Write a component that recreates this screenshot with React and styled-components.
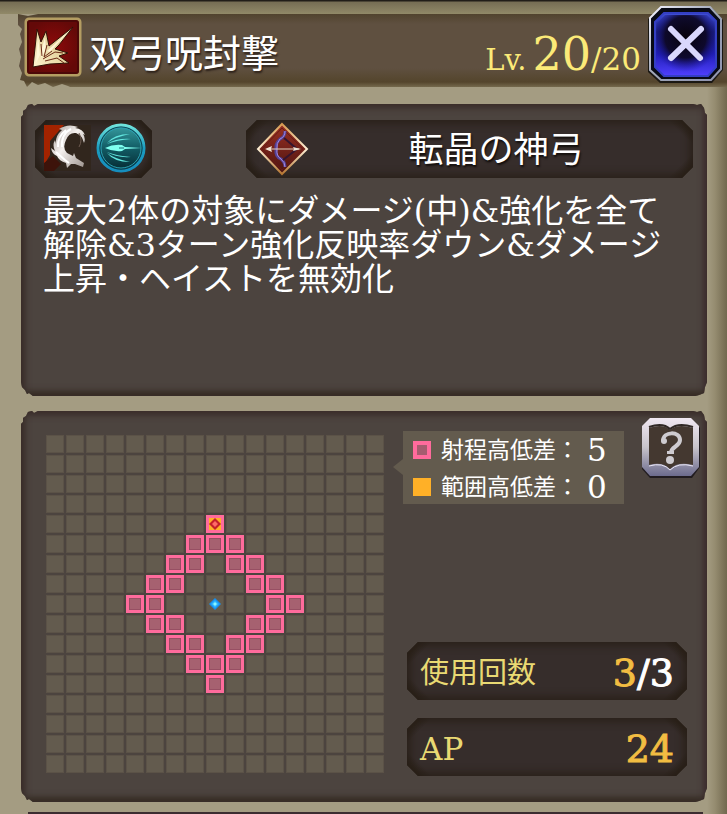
import React from "react"
import styled, {createGlobalStyle, css} from "styled-components"

const colors = {
    parchment: "#a49c82",
    bark: "#5f5040",
    panel: "#4c443f",
    inset: "#362d2b",
    tile: "#635b4e",
    pink: "#ff6b9c",
    orange: "#ffb027",
    lemon: "#fbea78",
    gold: "#f2bd42",
}

const GlobalStyle = createGlobalStyle`
    * {
        box-sizing: border-box;
    }

    body {
        margin: 0;
        background: ${colors.parchment};
        color: white;
        font-family: "DejaVu Serif", "Noto Sans CJK JP", serif;
    }

    h1, h2, p, dl, dt, dd {
        margin: 0;
        font-weight: 400;
    }
`

const Page = styled.main`
    display: flex;
    flex-direction: column;
    min-height: 100vh;
    padding-top: 14px;
    background:
        linear-gradient(#211d18 0 1px, #766d54 2px, #918968 14px, transparent 14px) top / 100% 14px no-repeat,
        linear-gradient(to right, transparent, #958c70 8px, #71684e 20px) right / 20px 100% no-repeat,
        ${colors.parchment};
`

const Header = styled.header`
    position: relative;
    z-index: 0;
    display: flex;
    height: 71px;
    padding-left: 24px;

    &::before {
        content: "";
        position: absolute;
        z-index: -1;
        inset: 0 0 -2px 18px;
        background: linear-gradient(#51432e, ${colors.bark} 10px, ${colors.bark} 54px, #54452c 68px, #75694d 73px);
        clip-path: polygon(0 0, 10px 2px, 20px 0, 100% 0, 100% 100%, 52px 100%, 50px 72px, 44px 70px, 35px 73px,
            27px 69px, 20px 71px, 14px 68px, 9px 73px, 6px 67px, 2px 66px, 4px 59px, 1px 52px, 3px 43px,
            1px 35px, 4px 28px, 2px 20px, 4px 15px, 0 11px);
    }
`

const SkillIcon = styled.svg`
    flex: none;
    width: 58px;
    height: 60px;
    margin-top: 3px;
`

const Title = styled.h1`
    flex: 1;
    padding: 4px 0 0 7px;
    font-size: 38px;
    line-height: 72px;
    white-space: nowrap;
    text-shadow: 1px 2px 2px #2b2019;
`

const Level = styled.p`
    display: flex;
    align-items: baseline;
    padding-top: 4px;
    color: ${colors.lemon};
    font-size: 31px;
    line-height: 72px;
    white-space: nowrap;
`

const LevelPrefix = styled.span`
    margin-right: 6px;
    font-size: 29px;
`

const LevelNow = styled.span`
    font-size: 46px;
`

const IconButton = styled.button`
    flex: none;
    padding: 0;
    border: 0;
    background: none;
    cursor: pointer;

    svg {
        display: block;
        width: 100%;
        height: 100%;
    }
`

const CloseButton = styled(IconButton)`
    width: 76px;
    height: 78px;
    margin: -9px 4px 0 6px;
`

const HelpButton = styled(IconButton)`
    width: 60px;
    height: 61px;
`

const Panel = styled.section`
    margin: 0 20px 15px 21px;
    background: ${colors.panel};
    box-shadow: inset 0 7px 6px -3px #3a2d2a, inset 6px 0 6px -2px #392d29, inset -6px 0 6px -3px #3c2b2d,
        inset 0 -7px 6px -2px #372d25;
    clip-path: polygon(0 13px, 2px 11px, 2px 7px, 5px 5px, 7px 1px, 11px 0, 13px 2px, 17px 0,
        calc(100% - 14px) 0, calc(100% - 10px) 1px, calc(100% - 6px) 0, calc(100% - 3px) 4px, calc(100% - 2px) 9px, 100% 11px,
        100% calc(100% - 14px), calc(100% - 2px) calc(100% - 9px), calc(100% - 3px) calc(100% - 3px),
        calc(100% - 8px) calc(100% - 1px), calc(100% - 12px) 100%, calc(100% - 18px) 100%,
        12px 100%, 8px calc(100% - 3px), 6px calc(100% - 2px), 4px calc(100% - 6px), 1px calc(100% - 9px), 0 calc(100% - 14px));
`

const SummaryPanel = styled(Panel)`
    min-height: 292px;
    margin-top: 19px;
    padding: 16px 14px;
`

const RangePanel = styled(Panel)`
    display: flex;
    gap: 19px;
    min-height: 391px;
    margin-bottom: 10px;
    padding: 7px 6px 26px 25px;
`

const NextPanel = styled.div`
    flex: 1;
    margin: 0 24px 0 28px;
    background: #3b2c30;
`

const carved = css`
    background:
        linear-gradient(135deg, #292018 9px, transparent 18px) 0 0 / 30px 30px no-repeat,
        linear-gradient(225deg, #292018 9px, transparent 18px) 100% 0 / 30px 30px no-repeat,
        linear-gradient(45deg, #292018 9px, transparent 18px) 0 100% / 30px 30px no-repeat,
        linear-gradient(315deg, #292018 9px, transparent 18px) 100% 100% / 30px 30px no-repeat,
        ${colors.inset};
    box-shadow: inset 0 0 9px 3px #292018;
    clip-path: polygon(11px 0, calc(100% - 11px) 0, 100% 11px, 100% calc(100% - 11px), calc(100% - 11px) 100%,
        11px 100%, 0 calc(100% - 11px), 0 11px);
`

const SummaryTop = styled.div`
    display: flex;
    justify-content: space-between;
    gap: 94px;
`

const Traits = styled.div`
    ${carved}
    display: flex;
    align-items: center;
    flex: none;
    gap: 5px;
    width: 117px;
    height: 58px;
    padding: 0 0 2px 9px;

    svg {
        flex: none;
    }
`

const Source = styled.div`
    ${carved}
    display: flex;
    align-items: center;
    flex: 1;
    height: 58px;
    padding: 0 10px;

    svg {
        flex: none;
    }
`

const SourceName = styled.h2`
    flex: 1;
    padding-top: 2px;
    font-size: 35px;
    line-height: 56px;
    text-align: center;
    text-shadow: 1px 2px 2px #120d0b;
`

const Description = styled.p`
    padding: 16px 6px 0 8px;
    font-size: 32px;
    line-height: 34px;
`

const Board = styled.div`
    display: grid;
    flex: none;
    grid-template-columns: repeat(17, 18px);
    grid-auto-rows: 18px;
    gap: 2px;
    align-self: flex-start;
    margin-top: 17px;
`

const Tile = styled.span`
    display: grid;
    place-items: center;
    background: ${colors.tile};
    border: 1px solid #5b5247;

    ${({$reach}) => $reach && css`
        border: 3px solid ${colors.pink};
        background: #a66170;
        box-shadow: inset 0 0 0 1px #974f63;
    `}
`

const Side = styled.div`
    display: flex;
    flex: 1;
    flex-direction: column;
    min-width: 0;
`

const SideTop = styled.div`
    display: flex;
    justify-content: space-between;
`

const Legend = styled.dl`
    position: relative;
    width: 221px;
    height: 73px;
    margin-top: 13px;
    background: ${colors.tile};

    &::before {
        content: "";
        position: absolute;
        top: 28px;
        left: -10px;
        border: 8px solid transparent;
        border-width: 8px 10px 8px 0;
        border-right-color: ${colors.tile};
    }
`

const LegendRow = styled.div`
    display: flex;
    align-items: center;
    height: 37px;
    padding-left: 10px;
    line-height: 36px;
    white-space: nowrap;

    dt {
        width: 142px;
        margin-left: 10px;
        font-size: 23px;
    }

    dd {
        flex: 1;
        padding-left: 4px;
        font-size: 31px;
    }
`

const Swatch = styled.span`
    width: 18px;
    height: 18px;
    background: ${({$color}) => $color};
    border: ${({$edge}) => $edge ? `4px solid ${$edge}` : 0};
`

const Stats = styled.dl`
    display: grid;
    gap: 18px;
    margin: auto 14px 0 4px;
`

const Stat = styled.div`
    ${carved}
    display: flex;
    align-items: center;
    justify-content: space-between;
    height: 58px;
    padding: 3px 13px 0;
    line-height: 54px;
    white-space: nowrap;

    dt {
        color: #e9d973;
        font-size: ${({$large}) => $large ? 31 : 29}px;
    }

    dd {
        font-size: 38px;
        -webkit-text-stroke: 1px currentColor;
    }
`

const Gold = styled.span`
    color: ${colors.gold};
`

const SIZE = 17
const CENTER = 8

const tiles = Array.from({length: SIZE * SIZE}, (_, i) => {
    const dx = i % SIZE - CENTER
    const dy = Math.floor(i / SIZE) - CENTER
    const distance = Math.abs(dx) + Math.abs(dy)
    return {
        id: i,
        reach: distance === 3 || distance === 4,
        caster: distance === 0,
        target: dx === 0 && dy === -4,
    }
})

const ClawIcon = () => (
    <SkillIcon viewBox="0 0 58 60" aria-hidden="true">
        <defs>
            <radialGradient id="claw-red">
                <stop offset="0" stopColor="#8f0a0a"/>
                <stop offset="1" stopColor="#640908"/>
            </radialGradient>
            <linearGradient id="claw-bone" x1="0" y1="1" x2="1" y2="0">
                <stop offset="0" stopColor="#fff5cf"/>
                <stop offset=".55" stopColor="#e3d09a"/>
                <stop offset="1" stopColor="#f8edc5"/>
            </linearGradient>
        </defs>
        <rect x="1" y="2" width="56" height="57" rx="5" fill="#3f3120"/>
        <rect x="2" y="2" width="54" height="56" rx="3" fill="url(#claw-red)" stroke="#b49d62" strokeWidth="3"/>
        <rect x="4" y="4" width="50" height="52" rx="2" fill="none" stroke="#4c0707" strokeWidth="2"/>
        <path d="M9 50L13 12l4 13 5-11 3 15L49 10 35 28l-4 4 13 4-9 3 10 7-19 1z" fill="url(#claw-bone)" stroke="#301106" strokeWidth="1"/>
        <path d="M14 19l2 19-4 8zM21 20l1 13-5 8 1-10zM44 15L26 35l-3-1z" fill="#fff7d6"/>
        <path d="M17 27l1 12M23 28l-3 12 8-6M19 42l12-7 8 1M21 44l12-3 7 5" stroke="#6b2b16" strokeWidth="1" fill="none"/>
    </SkillIcon>
)

const CloseIcon = () => (
    <svg viewBox="0 0 76 78" aria-hidden="true">
        <defs>
            <linearGradient id="close-rim" x2="1" y2="1">
                <stop offset="0" stopColor="#f3f3ff"/>
                <stop offset=".5" stopColor="#9ca3b4"/>
                <stop offset="1" stopColor="#9094b0"/>
            </linearGradient>
            <linearGradient id="close-blue" x2="0" y2="1">
                <stop offset="0" stopColor="#4050d8"/>
                <stop offset=".3" stopColor="#1b207d"/>
                <stop offset=".65" stopColor="#211fb8"/>
                <stop offset="1" stopColor="#503fff"/>
            </linearGradient>
            <radialGradient id="close-dark" cy=".38" r=".6">
                <stop offset="0" stopColor="#08030c"/>
                <stop offset=".6" stopColor="#0d0826" stopOpacity=".95"/>
                <stop offset="1" stopColor="#1712a0" stopOpacity="0"/>
            </radialGradient>
        </defs>
        <path d="M13 3h52l11 12v50L65 78H13L1 67V14z" fill="#1b1813"/>
        <path d="M14 2h49l11 12v50L64 75H14L3 65V13z" fill="#080a16" stroke="url(#close-rim)" strokeWidth="2"/>
        <path d="M17 8h44l8 8v46l-8 9H17l-9-9V17z" fill="url(#close-blue)" stroke="#343fc4" strokeWidth="2"/>
        <path d="M18 10h42l7 7v43l-8 8H18l-8-8V18z" fill="url(#close-dark)"/>
        <path d="M24 24l29 29M54 24L24 53" stroke="#d9d7fc" strokeWidth="6" strokeLinecap="round"/>
    </svg>
)

const HelpIcon = () => (
    <svg viewBox="0 0 60 61" aria-hidden="true">
        <defs>
            <linearGradient id="help-rim" x2="0" y2="1">
                <stop offset="0" stopColor="#f0e7f1"/>
                <stop offset=".5" stopColor="#c8c4cb"/>
                <stop offset="1" stopColor="#6c6b8d"/>
            </linearGradient>
        </defs>
        <path d="M9 2h42l8 8v39l-8 11H9L1 51V10z" fill="#211c20"/>
        <path d="M9 0h41l8 8v41l-8 9H9l-8-9V8z" fill="url(#help-rim)"/>
        <path d="M8 10q14-5 21 2 8-7 23-2v37q-15-4-23 4-8-8-21-4z" fill="#443830"/>
        <path d="M8 9q14-5 21 2 8-7 23-2" fill="none" stroke="#302825" strokeWidth="2"/>
        <path d="M8 48q14-4 21 4 8-8 23-4" fill="none" stroke="#e9e5f4" strokeWidth="1"/>
        <path d="M22 23c0-10 17-10 17-1 0 7-9 6-9 13" fill="none" stroke="#cecbd0" strokeWidth="4"/>
        <circle cx="23" cy="23" r="3" fill="#cecbd0"/>
        <path d="M26 33h7v3h-7z" fill="#cecbd0"/>
        <circle cx="29" cy="42" r="4" fill="#cecbd0"/>
    </svg>
)

const SlashIcon = () => (
    <svg width="47" height="46" viewBox="0 0 47 46" aria-hidden="true">
        <defs>
            <linearGradient id="slash-silver" x2="1" y2="1">
                <stop offset="0" stopColor="#a39b96"/>
                <stop offset=".45" stopColor="#f5f1ef"/>
                <stop offset="1" stopColor="#9a918b"/>
            </linearGradient>
        </defs>
        <path d="M0 0h47v46H0z" fill="#31261d"/>
        <path d="M0 0h20L6 16v14L0 40z" fill="#a32300"/>
        <path d="M0 38l9-7 8 8-7 7H0z" fill="#3d130a"/>
        <path d="M15 4Q24-2 34 2l-3 1q8 1 10 7l-2-1q3 4 1 9-2-8-8-10-7-1-10 7-4 8 1 13l6 3 1-3 2 5 8 5-1 4-8-3-4 0-4 4-1-5q-7-2-9-7-5-2-6-8l4 3q-3-6 0-11l1 4q-1-8 6-14z" fill="url(#slash-silver)"/>
        <path d="M22 5q-9 7-8 17M27 4q-10 5-9 18M12 27l9 8 4 3" fill="none" stroke="#fff" strokeWidth="2"/>
        <path d="M35 8q4 7 0 14" fill="none" stroke="#6d5a50" strokeWidth="1"/>
    </svg>
)

const PierceIcon = () => (
    <svg width="50" height="50" viewBox="0 0 50 50" aria-hidden="true">
        <defs>
            <linearGradient id="pierce-orb" x2="0" y2="1">
                <stop offset="0" stopColor="#389fa2"/>
                <stop offset=".5" stopColor="#125c65"/>
                <stop offset="1" stopColor="#052831"/>
            </linearGradient>
            <linearGradient id="pierce-ring" x2="0" y2="1">
                <stop offset="0" stopColor="#6fe3dc"/>
                <stop offset=".5" stopColor="#1b9cc0"/>
                <stop offset="1" stopColor="#168dbd"/>
            </linearGradient>
        </defs>
        <circle cx="25" cy="25" r="23" fill="url(#pierce-orb)" stroke="url(#pierce-ring)" strokeWidth="3"/>
        <circle cx="25" cy="25" r="21" fill="none" stroke="#0b4354" strokeWidth="1"/>
        <circle cx="25" cy="25" r="20" fill="none" stroke="#2b9fb0" strokeWidth="1"/>
        <path d="M9 25q8-4 17-3l3 2 17 1-17 1-3 2q-9 1-17-3z" fill="#7ffff0"/>
        <path d="M11 20q7-9 23-9-15 3-23 9zM11 21q9-6 24-5-14 1-24 5zM11 30q7 9 23 9-15-3-23-9zM11 29q9 6 24 5-14-1-24-5z" fill="#61e6df"/>
        <path d="M23 25h5" stroke="#176c75" strokeWidth="1"/>
    </svg>
)

const BowIcon = () => (
    <svg width="53" height="54" viewBox="0 0 53 54" aria-hidden="true">
        <defs>
            <linearGradient id="bow-red" x2="0" y2="1">
                <stop offset="0" stopColor="#9b3022"/>
                <stop offset="1" stopColor="#4b1411"/>
            </linearGradient>
            <linearGradient id="bow-rim" x2="0" y2="1">
                <stop offset="0" stopColor="#d79a50"/>
                <stop offset=".5" stopColor="#fff0d6"/>
                <stop offset="1" stopColor="#b57631"/>
            </linearGradient>
        </defs>
        <path d="M26 2l25 25-25 25L2 27z" fill="url(#bow-red)" stroke="url(#bow-rim)" strokeWidth="2"/>
        <path d="M26 6l21 21-21 21L6 27z" fill="none" stroke="#6a1b13" strokeWidth="1"/>
        <path d="M29 9q0 6-5 8-5 5-4 10-1 8 5 10 4 3 4 8" fill="none" stroke="#544196" strokeWidth="3"/>
        <path d="M29 9q0 6-5 8-4 4-3 10-1 7 4 10 4 3 4 8" fill="none" stroke="#a78adc" strokeWidth="1"/>
        <path d="M28 16l13 11-14 11" fill="none" stroke="#35152f" strokeWidth="2"/>
        <path d="M12 27h31" stroke="#e4d1bf" strokeWidth="1"/>
        <path d="M9 27l7-3-1 3 1 3zM37 25l8 2-8 2 1-2z" fill="#efe3d4"/>
    </svg>
)

const TargetMark = () => (
    <svg width="12" height="12" viewBox="0 0 12 12" aria-hidden="true">
        <path d="M0 0h12v12H0z" fill={colors.orange}/>
        <path d="M6 0l6 6-6 6-6-6z" fill="#c5202b"/>
        <path d="M6 3l3 3-3 3-3-3z" fill="#ff6b66"/>
    </svg>
)

const CasterMark = () => (
    <svg width="12" height="12" viewBox="0 0 12 12" aria-hidden="true">
        <path d="M6 0l6 6-6 6-6-6z" fill="#168ff0"/>
        <path d="M6 2l4 4-4 4-4-4z" fill="#2eb5ff"/>
        <path d="M6 4l2 2-2 2-2-2z" fill="#8cf5ff"/>
    </svg>
)

const RangeBoard = () => (
    <Board role="img" aria-label="射程">
        {tiles.map(({id, reach, caster, target}) => (
            <Tile key={id} $reach={reach}>
                {target && <TargetMark/>}
                {caster && <CasterMark/>}
            </Tile>
        ))}
    </Board>
)

const App = () => (
    <Page>
        <GlobalStyle/>
        <Header>
            <ClawIcon/>
            <Title>双弓呪封撃</Title>
            <Level>
                <LevelPrefix>Lv.</LevelPrefix>
                <LevelNow>20</LevelNow>
                <span>/20</span>
            </Level>
            <CloseButton type="button" aria-label="閉じる"><CloseIcon/></CloseButton>
        </Header>

        <SummaryPanel>
            <SummaryTop>
                <Traits>
                    <SlashIcon/>
                    <PierceIcon/>
                </Traits>
                <Source>
                    <BowIcon/>
                    <SourceName>転晶の神弓</SourceName>
                </Source>
            </SummaryTop>
            <Description>
                最大2体の対象にダメージ(中)&amp;強化を全て解除&amp;3ターン強化反映率ダウン&amp;ダメージ上昇・ヘイストを無効化
            </Description>
        </SummaryPanel>

        <RangePanel>
            <RangeBoard/>
            <Side>
                <SideTop>
                    <Legend>
                        <LegendRow>
                            <Swatch $color="#a65c6f" $edge={colors.pink}/>
                            <dt>射程高低差：</dt>
                            <dd>5</dd>
                        </LegendRow>
                        <LegendRow>
                            <Swatch $color={colors.orange}/>
                            <dt>範囲高低差：</dt>
                            <dd>0</dd>
                        </LegendRow>
                    </Legend>
                    <HelpButton type="button" aria-label="ヘルプ"><HelpIcon/></HelpButton>
                </SideTop>
                <Stats>
                    <Stat>
                        <dt>使用回数</dt>
                        <dd><Gold>3</Gold>/3</dd>
                    </Stat>
                    <Stat $large>
                        <dt>AP</dt>
                        <dd><Gold>24</Gold></dd>
                    </Stat>
                </Stats>
            </Side>
        </RangePanel>
        <NextPanel/>
    </Page>
)

export default App
